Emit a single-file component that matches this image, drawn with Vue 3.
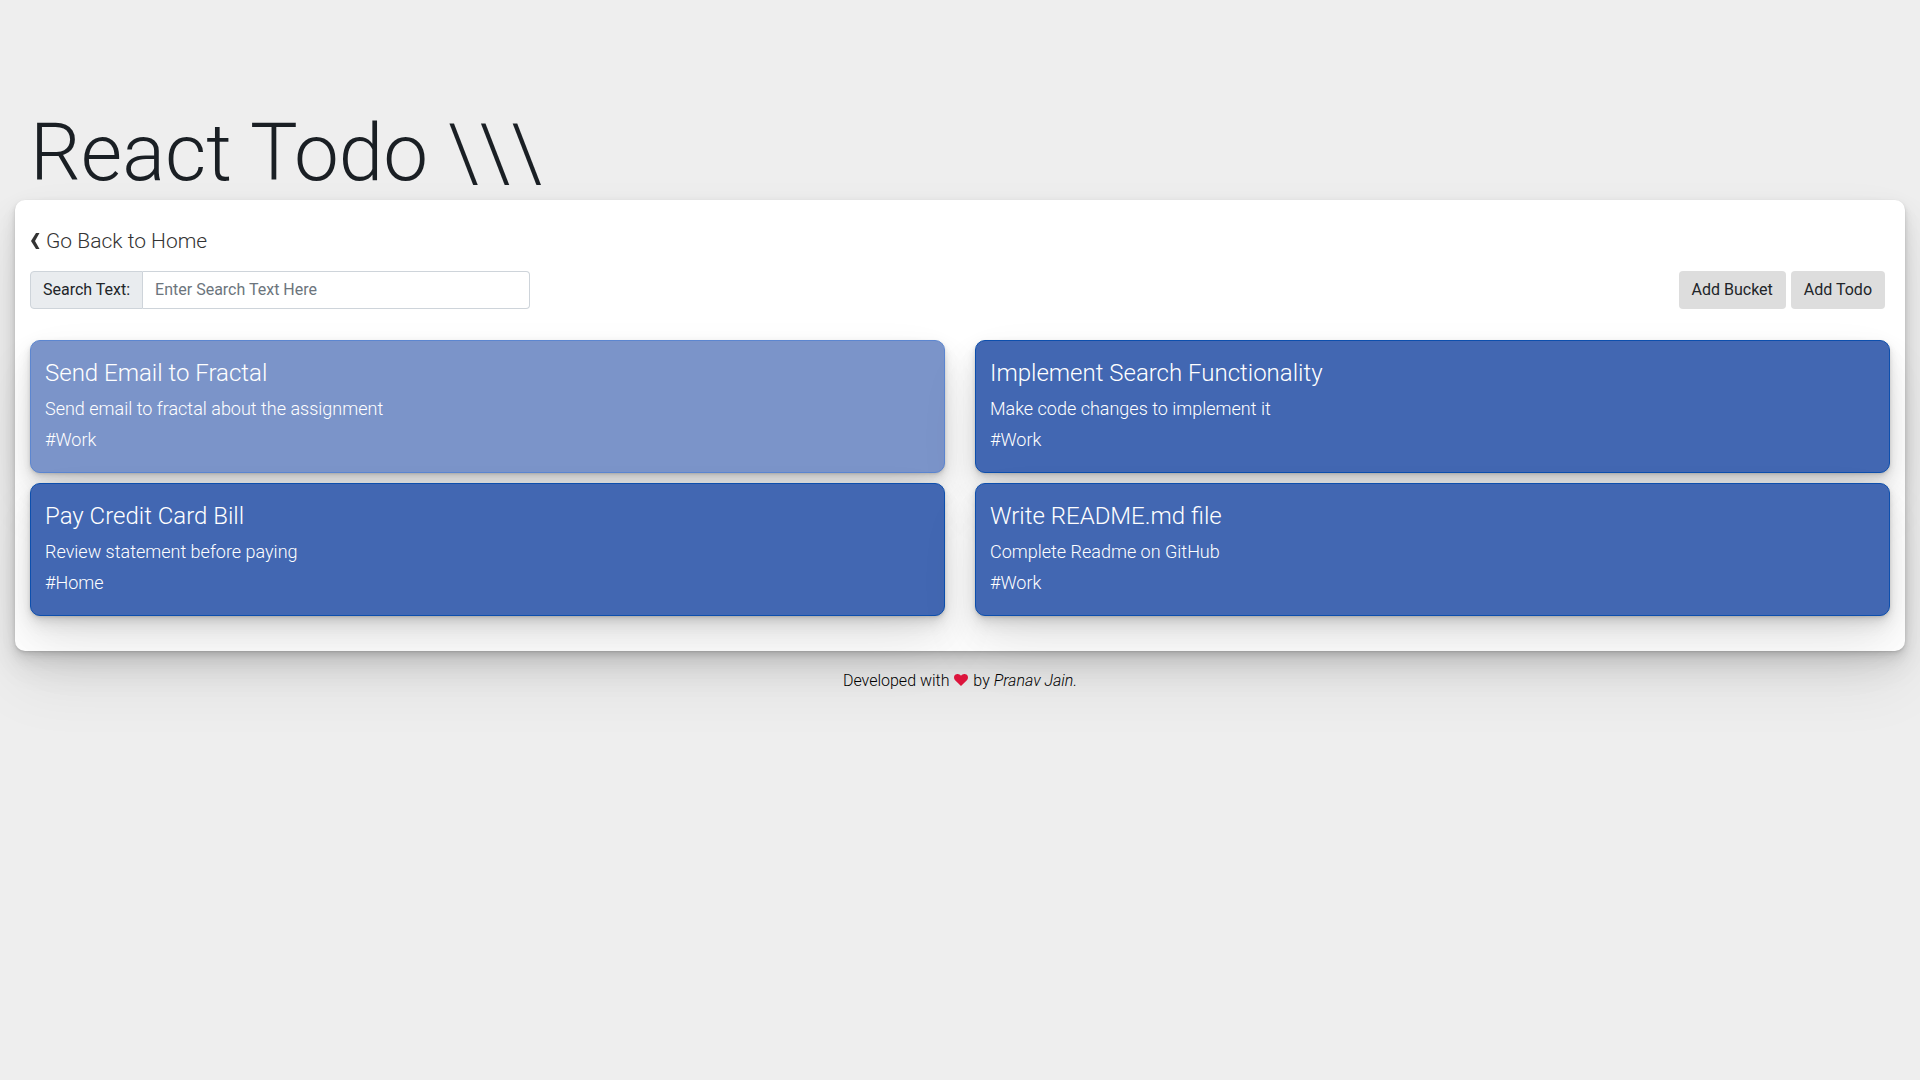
<script setup>
import { ref } from 'vue'

const query = ref('')

const todos = [
  { title: 'Send Email to Fractal', text: 'Send email to fractal about the assignment', bucket: '#Work', done: true },
  { title: 'Implement Search Functionality', text: 'Make code changes to implement it', bucket: '#Work', done: false },
  { title: 'Pay Credit Card Bill', text: 'Review statement before paying', bucket: '#Home', done: false },
  { title: 'Write README.md file', text: 'Complete Readme on GitHub', bucket: '#Work', done: false },
]
</script>

<template>
  <div class="page">
    <h1 class="title">React Todo \\\</h1>

    <main class="panel">
      <a class="back" href="#">
        <svg class="chevron" viewBox="0 0 10 16" aria-hidden="true">
          <path d="M6 0h3.500L5 8l4.500 8H6L1 8Z" fill="currentColor" />
        </svg>
        <span>Go Back to Home</span>
      </a>

      <div class="toolbar">
        <div class="search">
          <label class="search-label" for="search">Search Text:</label>
          <input id="search" v-model="query" class="search-input" type="text" placeholder="Enter Search Text Here" />
        </div>
        <div class="actions">
          <button class="action" type="button">Add Bucket</button>
          <button class="action" type="button">Add Todo</button>
        </div>
      </div>

      <div class="todos">
        <article v-for="todo in todos" :key="todo.title" class="todo" :class="{ done: todo.done }">
          <h2 class="todo-title">{{ todo.title }}</h2>
          <p class="todo-line">{{ todo.text }}</p>
          <p class="todo-line">{{ todo.bucket }}</p>
        </article>
      </div>
    </main>

    <footer class="footer">
      Developed with
      <svg class="heart" viewBox="0 0 14 12" role="img" aria-label="love">
        <path d="M7 12 1.100 6.200C-.6 4.400-.2 1.500 1.600.5 3.400-.5 5.600 0 7 1.800 8.400 0 10.600-.5 12.400.5c1.800 1 2.200 3.900.5 5.700Z" fill="#dc143c" />
      </svg>
      by <em>Pranav Jain.</em>
    </footer>
  </div>
</template>

<style>
body {
  margin: 0;
  background: #eee;
}
</style>

<style scoped>
.page {
  padding: 106px 15px 40px;
  font-family: Roboto, "Liberation Sans", sans-serif;
  font-size: 16px;
  font-weight: 300;
  line-height: 24px;
  color: #212529;
}

.title {
  margin: 0;
  padding: 0 15px;
  font-size: 80px;
  font-weight: 300;
  line-height: 94px;
  color: #1a1f24;
}

.panel {
  padding: 25px 15px;
  border-radius: 10px;
  background: #fff;
}

.panel,
.todo {
  box-shadow:
    0 1px 2px rgba(0, 0, 0, 0.07),
    0 2px 4px rgba(0, 0, 0, 0.07),
    0 4px 8px rgba(0, 0, 0, 0.07),
    0 8px 16px rgba(0, 0, 0, 0.07),
    0 16px 32px rgba(0, 0, 0, 0.07),
    0 32px 64px rgba(0, 0, 0, 0.07);
}

.back {
  display: inline-flex;
  align-items: center;
  gap: 6px;
  height: 31px;
  font-size: 21px;
  color: #333;
  text-decoration: none;
}

.chevron {
  width: 10px;
  height: 16px;
}

.toolbar {
  display: flex;
  justify-content: space-between;
  margin: 15px 5px 31px 0;
}

.search {
  display: flex;
  width: 500px;
  height: 38px;
}

.search-label,
.search-input {
  box-sizing: border-box;
  padding: 6px 12px;
  border: 1px solid #ced4da;
  font: inherit;
  font-weight: 400;
}

.search-label {
  border-radius: 4px 0 0 4px;
  background: #e9ecef;
}

.search-input {
  flex: 1;
  min-width: 0;
  border-left: 0;
  border-radius: 0 4px 4px 0;
  background: #fff;
  color: #495057;
}

.search-input::placeholder {
  color: #6c757d;
  opacity: 1;
}

.actions {
  display: flex;
  gap: 5px;
}

.action {
  height: 38px;
  padding: 0 13px;
  border: 0;
  border-radius: 4px;
  background: #ddd;
  color: #212529;
  font: inherit;
  font-weight: 400;
}

.todos {
  display: grid;
  grid-template-columns: 1fr 1fr;
  gap: 10px 30px;
  padding-bottom: 10px;
}

.todo {
  padding: 14px;
  border: 1px solid #0d4fad;
  border-radius: 10px;
  background: #4267b2;
  color: #fff;
}

.todo.done {
  border-color: #5c86d0;
  background: #7b94c9;
}

.todo-title {
  margin: 0 0 6px;
  font-size: 24px;
  font-weight: 300;
  line-height: 36px;
}

.todo-line {
  margin: 0 0 7px;
  font-size: 18px;
}

.todo-line:last-child {
  margin: 0 0 6px;
}

.footer {
  padding-top: 18px;
  text-align: center;
  color: #000;
}

.heart {
  width: 14px;
  height: 12px;
  margin: 0 1px;
}
</style>
